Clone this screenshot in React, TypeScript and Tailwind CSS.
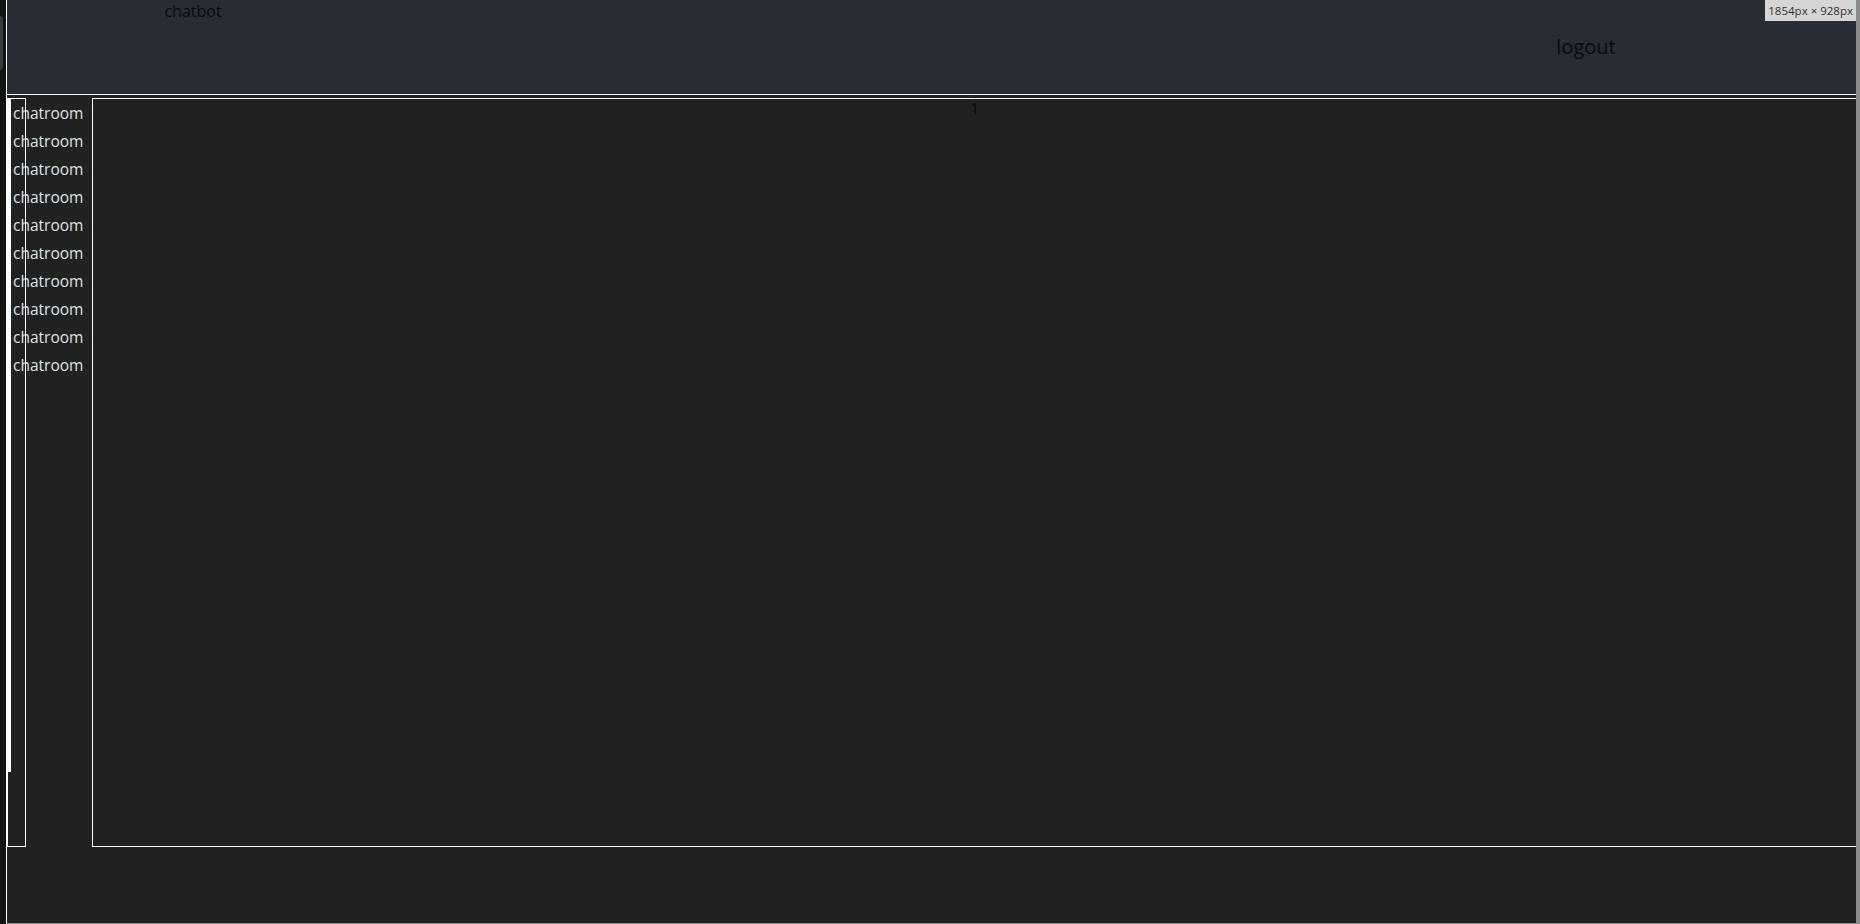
import React from 'react';

const rooms = Array.from({ length: 10 }, () => 'chatroom');

export default function App() {
  return (
    <div className="relative flex h-[924px] w-[1860px] overflow-hidden bg-[#131313] font-['Open_Sans',sans-serif]">
      {/* left window edge */}
      <div className="w-[6px] shrink-0 pt-[16px]">
        <div className="h-[54px] w-[3px] rounded-r-[3px] bg-[#3a3a3a]" />
      </div>

      <div className="flex w-[1850px] shrink-0 flex-col border-b border-l border-b-[#8c8c8c] border-l-white bg-[#212121]">
        {/* header */}
        <header className="flex h-[95px] shrink-0 justify-between border-b border-white bg-[#282c34]">
          <div className="w-[372px] pt-[1px] text-center text-[16px] leading-[20px] text-[#0b0b0b]">chatbot</div>
          <div className="flex w-[540px] items-center justify-center text-[20px] text-[#0b0b0b]">logout</div>
        </header>

        <div className="flex flex-1 items-start pt-[3px]">
          {/* sidebar */}
          <div className="flex h-[749px] w-[19px] shrink-0 border border-white">
            <div className="h-[673px] w-[3px] shrink-0 bg-white" />
            <ul className="pl-[2px] text-[15.5px] leading-[28px] whitespace-nowrap text-[#dde3e8]">
              {rooms.map((r, i) => (
                <li key={i}>{r}</li>
              ))}
            </ul>
          </div>

          {/* spacer between sidebar and chat */}
          <div className="w-[66px] shrink-0" />

          {/* chat area */}
          <main className="h-[749px] flex-1 border-y border-l border-white text-center text-[16px] leading-[20px] text-[#0b0b0b]">
            1
          </main>
        </div>
      </div>

      {/* right edge strip */}
      <div className="w-[4px] shrink-0 bg-[#8c8c8c]" />

      {/* devtools size label overlay */}
      <div className="absolute right-[4px] top-0 flex h-[21px] items-center bg-[#d6d6d6] px-[3px] text-[11.5px] text-[#333]">
        1854px × 928px
      </div>
    </div>
  );
}
